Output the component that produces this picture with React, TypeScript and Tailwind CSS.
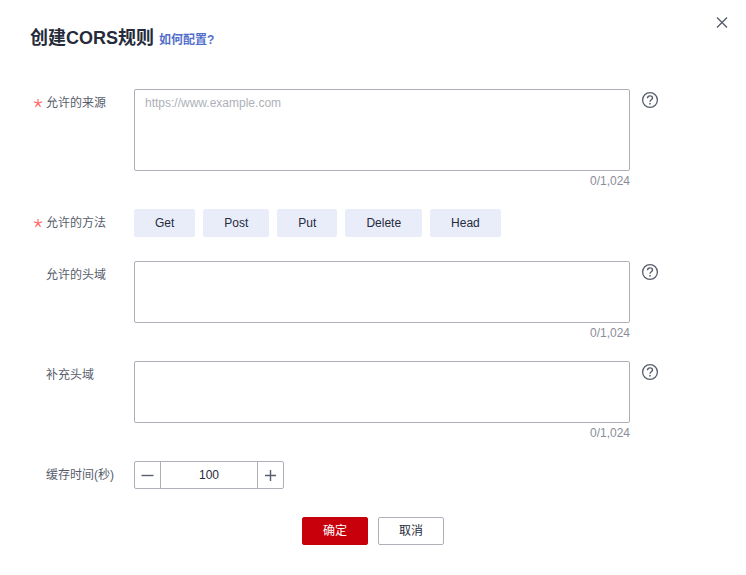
import { useState } from "react";
import type { ReactNode } from "react";

const METHODS = ["Get", "Post", "Put", "Delete", "Head"];
const MAX_LENGTH = 1024;

function HelpIcon() {
  return (
    <svg viewBox="0 0 16 16" className="block size-4 overflow-visible" fill="none" stroke="currentColor" aria-hidden="true">
      <circle cx="8" cy="8" r="7.4" strokeWidth="1.3" />
      <path d="M5.5 6.2C5.5 4.7 6.5 3.9 8 3.9s2.5.9 2.5 2.1c0 1.7-2.5 1.8-2.5 3.7" strokeWidth="1.4" />
      <path d="M8 11v1.5" strokeWidth="1.5" />
    </svg>
  );
}

function RowLabel({ htmlFor, id, required, children }: { htmlFor?: string; id?: string; required?: boolean; children: ReactNode }) {
  return (
    <div className="flex w-[102px] shrink-0 items-center leading-7 text-[#575d6c]">
      <span className="flex w-[14px] shrink-0" aria-hidden="true">
        {required && (
          <svg viewBox="0 0 12 12" className="size-3" stroke="#ff6b6b" strokeWidth="1.2">
            <path d="M6 2V6.2M2 4.9L6 6.2M10 4.9L6 6.2M3.5 9.8L6 6.2M8.5 9.8L6 6.2" />
          </svg>
        )}
      </span>
      {htmlFor ? <label htmlFor={htmlFor}>{children}</label> : <span id={id}>{children}</span>}
    </div>
  );
}

function TextField({ id, label, required, tall, placeholder }: { id: string; label: string; required?: boolean; tall?: boolean; placeholder?: string }) {
  const [value, setValue] = useState("");
  return (
    <div className="mb-[18px] flex items-start">
      <RowLabel htmlFor={id} required={required}>{label}</RowLabel>
      <div className="min-w-0 flex-1">
        <textarea
          id={id}
          value={value}
          maxLength={MAX_LENGTH}
          placeholder={placeholder}
          onChange={(e) => setValue(e.target.value)}
          className={`block w-full resize-none rounded-xs border border-[#adb0b8] bg-white px-[10px] py-1 leading-[18px] text-[#252b3a] outline-none placeholder:text-[#adb0b8] focus:border-[#526ecc] ${tall ? "h-[82px]" : "h-[62px]"}`}
        />
        <div className="text-right leading-5 text-[#8a8e99]">{value.length}/1,024</div>
      </div>
      <button type="button" aria-label={`${label}帮助`} className="ml-3 mt-[3px] text-[#575d6c]">
        <HelpIcon />
      </button>
    </div>
  );
}

export default function App() {
  const [selected, setSelected] = useState<string[]>([]);
  const [seconds, setSeconds] = useState(100);

  const toggle = (method: string) =>
    setSelected((list) => (list.includes(method) ? list.filter((m) => m !== method) : [...list, method]));

  return (
    <main className="min-h-screen bg-white pb-[30px] pt-4 font-['Liberation_Sans','Noto_Sans_CJK_SC',sans-serif] text-xs text-[#252b3a]">
      <header className="mb-[37px] flex items-start justify-between pl-[30px] pr-[18px]">
        <div className="flex items-baseline gap-[5px] pt-[9px]">
          <h1 className="text-lg font-bold leading-[27px]">创建CORS规则</h1>
          <a href="#help" className="font-bold text-[#526ecc]">如何配置?</a>
        </div>
        <button type="button" aria-label="关闭" className="text-[#575d6c]">
          <svg viewBox="0 0 12 12" className="block size-3" fill="none" stroke="currentColor" strokeWidth="1.4" aria-hidden="true">
            <path d="M1 1.5l10 10M11 1.5l-10 10" />
          </svg>
        </button>
      </header>

      <form onSubmit={(e) => e.preventDefault()}>
        <div className="pl-8 pr-[88px]">
          <TextField id="origin" label="允许的来源" required tall placeholder="https://www.example.com" />

          <div className="mb-6 flex items-start">
            <RowLabel id="methods-label" required>允许的方法</RowLabel>
            <div role="group" aria-labelledby="methods-label" className="flex flex-wrap gap-2">
              {METHODS.map((method) => (
                <button
                  key={method}
                  type="button"
                  aria-pressed={selected.includes(method)}
                  onClick={() => toggle(method)}
                  className="h-7 rounded-xs border border-[#e9edfa] bg-[#e9edfa] px-5 aria-pressed:border-[#526ecc]"
                >
                  {method}
                </button>
              ))}
            </div>
          </div>

          <TextField id="allowed-headers" label="允许的头域" />
          <TextField id="extra-headers" label="补充头域" />

          <div className="mb-7 flex items-start">
            <RowLabel htmlFor="cache">缓存时间(秒)</RowLabel>
            <div className="flex h-7 w-[150px] rounded-xs border border-[#adb0b8]">
              <button type="button" aria-label="减少" onClick={() => setSeconds((n) => Math.max(0, n - 1))} className="flex w-[26px] shrink-0 items-center justify-center border-r border-[#adb0b8] text-[#575d6c]">
                <svg viewBox="0 0 13 13" className="size-[13px]" stroke="currentColor" strokeWidth="1.4" aria-hidden="true">
                  <path d="M.5 6.5h12" />
                </svg>
              </button>
              <input
                id="cache"
                type="text"
                inputMode="numeric"
                value={seconds}
                onChange={(e) => setSeconds(Number(e.target.value.replace(/\D/g, "")))}
                className="min-w-0 flex-1 bg-transparent text-center outline-none"
              />
              <button type="button" aria-label="增加" onClick={() => setSeconds((n) => n + 1)} className="flex w-[26px] shrink-0 items-center justify-center border-l border-[#adb0b8] text-[#575d6c]">
                <svg viewBox="0 0 13 13" className="size-[13px]" stroke="currentColor" strokeWidth="1.4" aria-hidden="true">
                  <path d="M1 6.5h11M6.5 1v11" />
                </svg>
              </button>
            </div>
          </div>
        </div>

        <div className="flex justify-center gap-[10px]">
          <button type="submit" className="h-7 rounded-xs border border-[#c7000b] bg-[#c7000b] px-5 text-white">确定</button>
          <button type="button" className="h-7 rounded-xs border border-[#adb0b8] bg-white px-5">取消</button>
        </div>
      </form>
    </main>
  );
}
